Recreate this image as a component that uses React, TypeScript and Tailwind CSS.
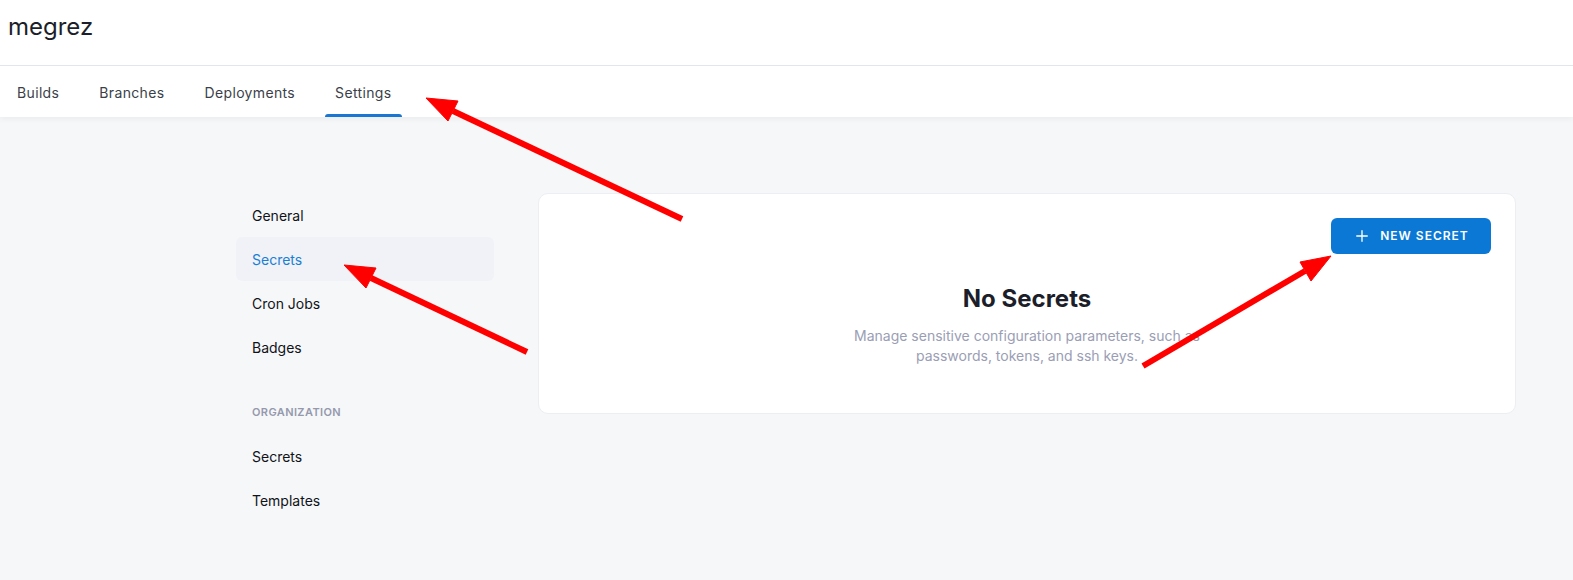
import { Plus } from 'lucide-react'

const tabs = ['Builds', 'Branches', 'Deployments', 'Settings']
const repoItems = ['General', 'Secrets', 'Cron Jobs', 'Badges']
const orgItems = ['Secrets', 'Templates']

function Arrows() {
  // annotation arrows drawn over the page
  const arrows = [
    { tail: [682, 219], base: [453, 111], head: '426,98 458,101 448,121' },
    { tail: [527, 352], base: [371, 278], head: '344,265 376,268 366,288' },
    { tail: [1143, 366], base: [1305, 271], head: '1331,256 1311,281 1300,262' },
  ]
  return (
    <svg className="absolute inset-0 z-20 pointer-events-none" width={1573} height={580} viewBox="0 0 1573 580">
      {arrows.map((a, i) => (
        <g key={i} fill="#ff0000" stroke="#ff0000">
          <line x1={a.tail[0]} y1={a.tail[1]} x2={a.base[0]} y2={a.base[1]} strokeWidth={6} />
          <polygon points={a.head} strokeWidth={1} />
        </g>
      ))}
    </svg>
  )
}

export default function App() {
  return (
    <div className="relative min-h-screen bg-[#f6f7f9] font-['Inter',sans-serif] overflow-hidden">
      {/* Header */}
      <div className="bg-white shadow-[0_2px_6px_rgba(0,0,0,0.05)] relative z-10">
        <div className="h-[66px] border-b border-[#e3e5ea] px-2 pt-[12px]">
          <h1 className="text-[24px] leading-[30px] text-[#1c1f2a]">megrez</h1>
        </div>
        <nav className="flex gap-5 h-[51px] px-[7px] pt-[1px]">
          {tabs.map(t => (
            <div key={t} className="relative flex items-center px-[10px] text-[14px] text-[#3b3f4a] tracking-[0.35px]">
              {t}
              {t === 'Settings' && <span className="absolute left-0 right-0 bottom-0 h-[3px] rounded-t bg-[#1976d2]" />}
            </div>
          ))}
        </nav>
      </div>

      {/* Body */}
      <div className="flex gap-[44px] pl-[236px] pr-[57px] pt-[76px]">
        <aside className="w-[258px] shrink-0">
          {repoItems.map(item => (
            <div
              key={item}
              className={
                'h-[44px] flex items-center px-4 rounded-md text-[14px] ' +
                (item === 'Secrets' ? 'bg-[#f0f2f7] text-[#1a7fd4]' : 'text-[#111318]')
              }
            >
              {item}
            </div>
          ))}
          <div className="h-[44px] mt-[21px] flex items-center px-4 text-[11px] font-semibold tracking-[0.4px] text-[#9599ad]">
            ORGANIZATION
          </div>
          {orgItems.map(item => (
            <div key={item} className="h-[44px] flex items-center px-4 text-[14px] text-[#111318]">
              {item}
            </div>
          ))}
        </aside>

        <section className="flex-1 h-[221px] bg-white rounded-[10px] border border-[#eceef2] p-6">
          <div className="flex justify-end">
            <button className="flex items-center justify-center gap-[9px] w-[160px] h-[36px] rounded-md bg-[#0a78d4] text-white text-[12px] font-semibold tracking-[1px]">
              <Plus size={18} strokeWidth={1.8} />
              NEW SECRET
            </button>
          </div>
          <div className="flex flex-col items-center mt-[30px]">
            <h2 className="text-[24px] leading-[30px] font-bold text-[#1c1f2a]">No Secrets</h2>
            <p className="mt-[12px] max-w-[360px] text-center text-[14px] leading-[20px] text-[#9a9eb4]">
              Manage sensitive configuration parameters, such as passwords, tokens, and ssh keys.
            </p>
          </div>
        </section>
      </div>

      <Arrows />
    </div>
  )
}
